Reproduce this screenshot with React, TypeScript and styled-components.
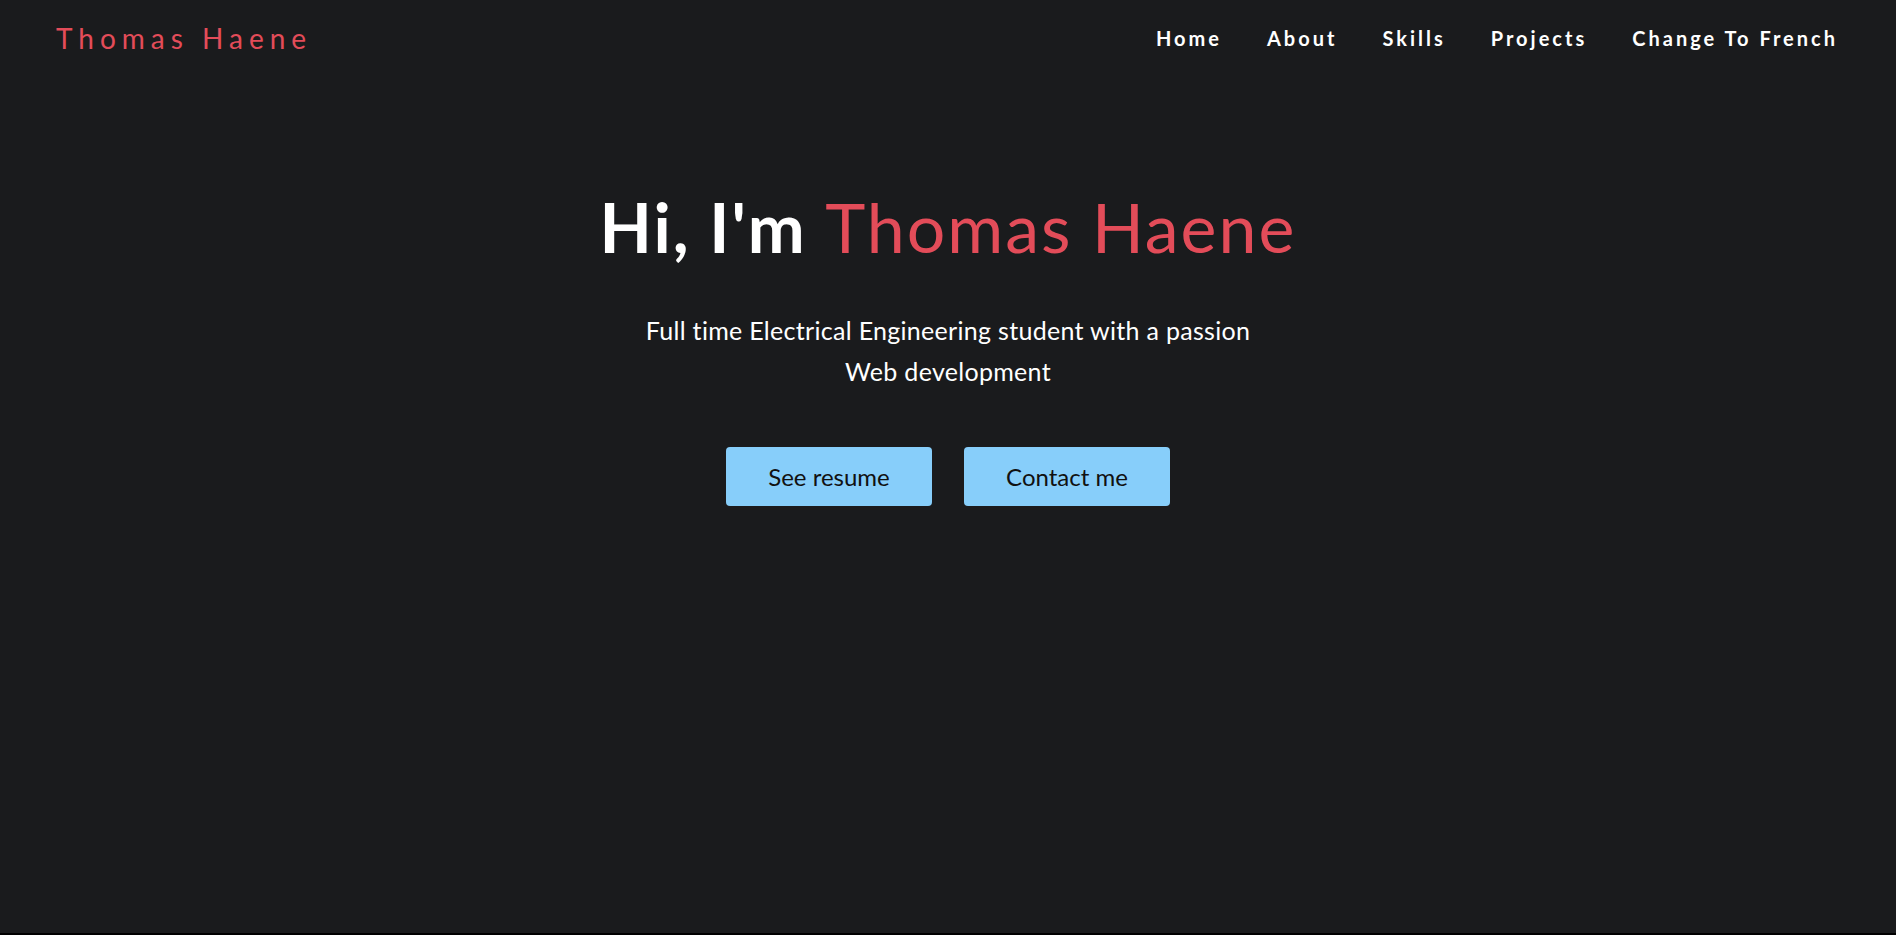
import styled, { createGlobalStyle } from "styled-components";

const GlobalStyle = createGlobalStyle`
  html, body {
    margin: 0;
    padding: 0;
    background: #000;
  }
  body {
    font-family: Lato, "Open Sans", sans-serif;
  }
`;

const Page = styled.div`
  height: calc(100vh - 2px);
  background: #1a1b1d;
  display: flex;
  flex-direction: column;
  overflow: hidden;
`;

const Header = styled.header`
  display: flex;
  align-items: center;
  justify-content: space-between;
  height: 76px;
  padding: 0 58px 0 56px;
`;

const Logo = styled.a`
  color: #e34c59;
  font-size: 28px;
  letter-spacing: 6px;
  font-weight: 400;
`;

const Nav = styled.nav`
  display: flex;
  gap: 45px;
`;

const NavLink = styled.a`
  color: #fff;
  font-size: 20px;
  letter-spacing: 3px;
  font-weight: 700;
`;

const Hero = styled.section`
  display: flex;
  flex-direction: column;
  align-items: center;
  padding-top: 110px;
`;

const Title = styled.h1`
  margin: 0;
  font-size: 68px;
  font-weight: 700;
  line-height: 1.2;
  letter-spacing: 2px;
  color: #fff;
`;

const Accent = styled.span`
  color: #e34c59;
  font-weight: 400;
`;

const Tagline = styled.p`
  margin: 42px 0 0;
  font-size: 25px;
  line-height: 41px;
  letter-spacing: 0.3px;
  color: #fff;
  text-align: center;
`;

const Actions = styled.div`
  display: flex;
  gap: 32px;
  margin-top: 55px;
`;

const Button = styled.button`
  width: 206px;
  height: 59px;
  border: none;
  border-radius: 4px;
  background: #87cefa;
  color: #111;
  font-family: inherit;
  font-size: 24px;
  cursor: pointer;
`;

export default function App() {
  return (
    <>
      <GlobalStyle />
      <Page>
        <Header>
          <Logo>Thomas Haene</Logo>
          <Nav>
            <NavLink>Home</NavLink>
            <NavLink>About</NavLink>
            <NavLink>Skills</NavLink>
            <NavLink>Projects</NavLink>
            <NavLink>Change To French</NavLink>
          </Nav>
        </Header>
        <Hero>
          <Title>
            Hi, I'm <Accent>Thomas Haene</Accent>
          </Title>
          <Tagline>
            Full time Electrical Engineering student with a passion
            <br />
            Web development
          </Tagline>
          <Actions>
            <Button>See resume</Button>
            <Button>Contact me</Button>
          </Actions>
        </Hero>
      </Page>
    </>
  );
}
